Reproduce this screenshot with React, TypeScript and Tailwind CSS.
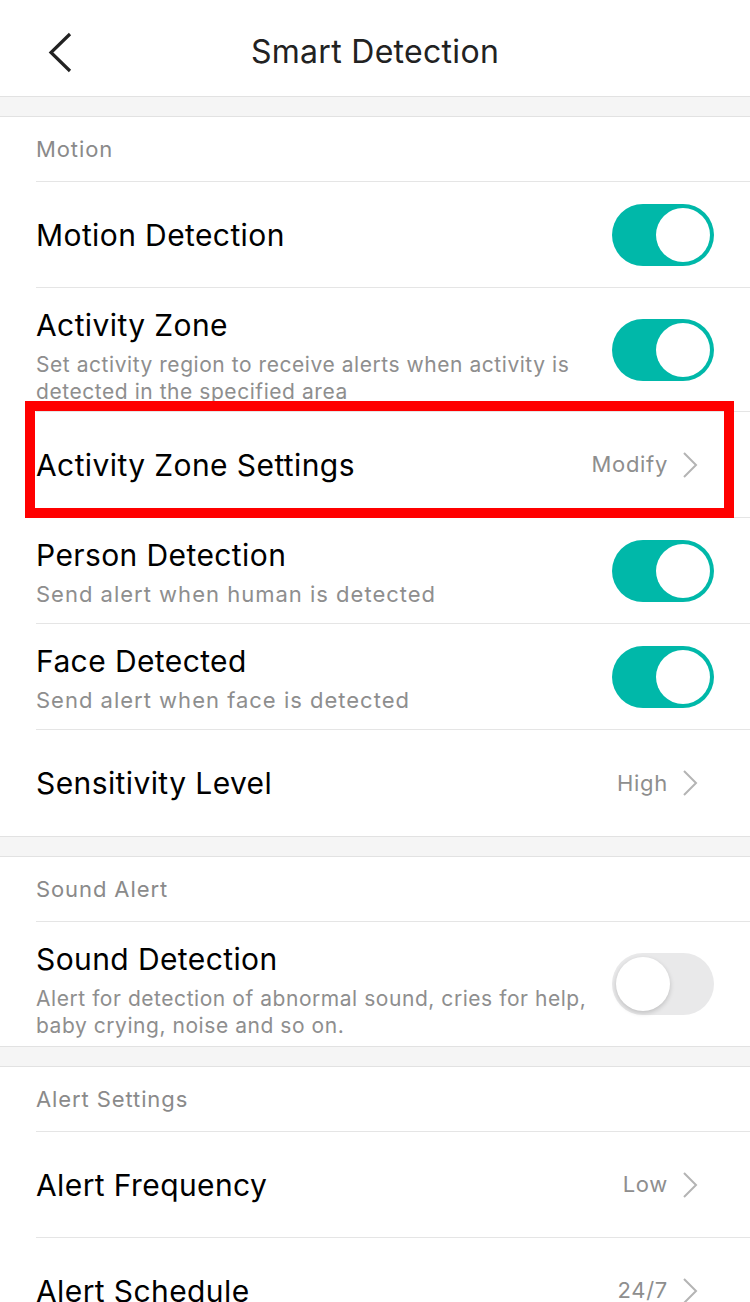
import React from "react";

function Toggle({ on }: { on: boolean }) {
  return (
    <div
      className={`relative h-[62px] w-[102px] shrink-0 rounded-full ${
        on ? "bg-[#00b8a9]" : "bg-[#e9e9ea]"
      }`}
    >
      <div
        className={`absolute top-[4px] h-[54px] w-[54px] rounded-full bg-white ${
          on ? "right-[4px]" : "left-[4px] shadow-[0_2px_5px_rgba(0,0,0,0.18)]"
        }`}
      />
    </div>
  );
}

function Chevron() {
  return (
    <svg width="16" height="28" viewBox="0 0 16 28" className="shrink-0">
      <path d="M2 2 L14 14 L2 26" fill="none" stroke="#b4b4b4" strokeWidth="2" />
    </svg>
  );
}

function SectionHeader({ label }: { label: string }) {
  return (
    <div className="ml-[36px] flex h-[65px] items-center border-b border-[#e5e5e5] text-[22px] tracking-[0.9px] text-[#8a8a8a]">
      {label}
    </div>
  );
}

function Band() {
  return <div className="h-[21px] border-y border-[#e2e2e2] bg-[#f5f5f5]" />;
}

type RowProps = {
  title: string;
  sub?: React.ReactNode;
  toggle?: boolean;
  value?: string;
  last?: boolean;
  tall?: boolean;
};

function Row({ title, sub, toggle, value, last, tall }: RowProps) {
  return (
    <div
      className={`ml-[36px] flex items-center justify-between pr-[36px] ${
        tall ? "h-[124px]" : "h-[106px]"
      } ${last ? "" : "border-b border-[#e5e5e5]"}`}
    >
      <div className={`flex min-w-0 flex-col ${sub ? "self-start pt-[18px]" : ""}`}>
        <div className="text-[30px] leading-[38px] tracking-[0.4px] text-black">{title}</div>
        {sub && (
          <div
            className={`mt-[7px] whitespace-nowrap leading-[27px] text-[#8e8e8e] ${
              tall ? "text-[21px] tracking-[0.55px]" : "text-[22px] tracking-[1px]"
            }`}
          >
            {sub}
          </div>
        )}
      </div>
      {toggle !== undefined && <Toggle on={toggle} />}
      {value && (
        <div className="mr-[16px] flex items-center gap-[14px] text-[22px] tracking-[0.7px] text-[#8e8e8e]">
          <span>{value}</span>
          <Chevron />
        </div>
      )}
    </div>
  );
}

export default function App() {
  return (
    <div className="h-[1302px] w-[750px] overflow-hidden bg-white font-['Inter',sans-serif]">
      <div className="relative flex h-[97px] items-center justify-center border-b border-[#e2e2e2] pt-[8px]">
        <svg
          width="28"
          height="44"
          viewBox="0 0 28 44"
          className="absolute left-[46px] top-[31px]"
        >
          <path d="M24 3 L5 21.5 L24 40" fill="none" stroke="#222" strokeWidth="3.2" />
        </svg>
        <span className="text-[32px] tracking-[0.3px] text-[#222]">Smart Detection</span>
      </div>
      <div className="h-[20px] border-b border-[#e2e2e2] bg-[#f5f5f5]" />

      <SectionHeader label="Motion" />
      <Row title="Motion Detection" toggle />
      <Row
        title="Activity Zone"
        tall
        toggle
        sub={
          <>
            Set activity region to receive alerts when activity is
            <br />
            detected in the specified area
          </>
        }
      />
      <div className="relative">
        <Row title="Activity Zone Settings" value="Modify" />
        <div className="pointer-events-none absolute left-[25px] right-[16px] top-[-11px] h-[117px] border-[10px] border-[#ff0000]" />
      </div>
      <Row title="Person Detection" toggle sub="Send alert when human is detected" />
      <Row title="Face Detected" toggle sub="Send alert when face is detected" />
      <Row title="Sensitivity Level" value="High" last />

      <Band />
      <SectionHeader label="Sound Alert" />
      <Row
        title="Sound Detection"
        tall
        last
        toggle={false}
        sub={
          <>
            Alert for detection of abnormal sound, cries for help,
            <br />
            baby crying, noise and so on.
          </>
        }
      />

      <Band />
      <SectionHeader label="Alert Settings" />
      <Row title="Alert Frequency" value="Low" />
      <Row title="Alert Schedule" value="24/7" />
    </div>
  );
}
